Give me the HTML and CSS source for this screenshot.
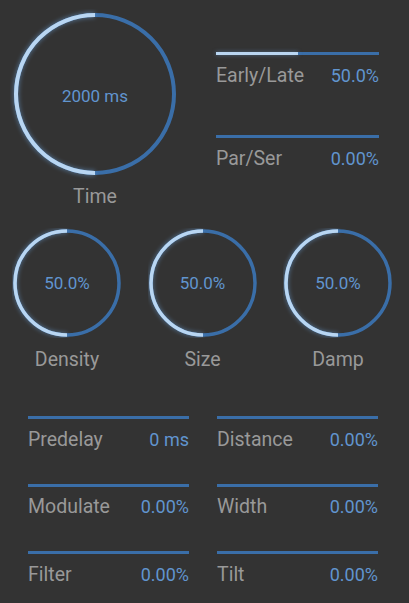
FILE: index.html
```html
<!DOCTYPE html>
<html lang="en">
<head>
    <meta charset="UTF-8">
    <meta name="viewport" content="width=device-width, initial-scale=1.0">
    <title>Reverb</title>
    <link rel="stylesheet" href="styles.css">
</head>
<body>
    <div class="top">
        <div class="big-knob">
            <div class="knob">
                <svg width="170" height="170" viewBox="0 0 170 170">
                    <circle class="track" cx="85" cy="85" r="79" stroke-width="4"/>
                    <path class="glow" d="M85 164 A79 79 0 0 1 85 6" stroke-width="6"/>
                    <path class="fill" d="M85 164 A79 79 0 0 1 85 6" stroke-width="4"/>
                </svg>
                <span class="knob-value big">2000 ms</span>
            </div>
            <div class="knob-label">Time</div>
        </div>

        <div class="side">
            <div class="slider">
                <div class="bar"><div class="bar-fill" style="width: 50%"></div></div>
                <div class="slider-row">
                    <span class="slider-label">Early/Late</span>
                    <span class="slider-value">50.0%</span>
                </div>
            </div>
            <div class="slider">
                <div class="bar"></div>
                <div class="slider-row">
                    <span class="slider-label">Par/Ser</span>
                    <span class="slider-value">0.00%</span>
                </div>
            </div>
        </div>
    </div>

    <div class="knob-row">
        <div class="small-knob">
            <div class="knob">
                <svg width="110" height="110" viewBox="0 0 110 110">
                    <circle class="track" cx="55" cy="55" r="52" stroke-width="3.5"/>
                    <path class="glow" d="M55 107 A52 52 0 0 1 55 3" stroke-width="5"/>
                    <path class="fill" d="M55 107 A52 52 0 0 1 55 3" stroke-width="3.5"/>
                </svg>
                <span class="knob-value">50.0%</span>
            </div>
            <div class="knob-label">Density</div>
        </div>
        <div class="small-knob">
            <div class="knob">
                <svg width="110" height="110" viewBox="0 0 110 110">
                    <circle class="track" cx="55" cy="55" r="52" stroke-width="3.5"/>
                    <path class="glow" d="M55 107 A52 52 0 0 1 55 3" stroke-width="5"/>
                    <path class="fill" d="M55 107 A52 52 0 0 1 55 3" stroke-width="3.5"/>
                </svg>
                <span class="knob-value">50.0%</span>
            </div>
            <div class="knob-label">Size</div>
        </div>
        <div class="small-knob">
            <div class="knob">
                <svg width="110" height="110" viewBox="0 0 110 110">
                    <circle class="track" cx="55" cy="55" r="52" stroke-width="3.5"/>
                    <path class="glow" d="M55 107 A52 52 0 0 1 55 3" stroke-width="5"/>
                    <path class="fill" d="M55 107 A52 52 0 0 1 55 3" stroke-width="3.5"/>
                </svg>
                <span class="knob-value">50.0%</span>
            </div>
            <div class="knob-label">Damp</div>
        </div>
    </div>

    <div class="slider-grid">
        <div class="slider">
            <div class="bar"></div>
            <div class="slider-row">
                <span class="slider-label">Predelay</span>
                <span class="slider-value">0 ms</span>
            </div>
        </div>
        <div class="slider">
            <div class="bar"></div>
            <div class="slider-row">
                <span class="slider-label">Distance</span>
                <span class="slider-value">0.00%</span>
            </div>
        </div>
        <div class="slider">
            <div class="bar"></div>
            <div class="slider-row">
                <span class="slider-label">Modulate</span>
                <span class="slider-value">0.00%</span>
            </div>
        </div>
        <div class="slider">
            <div class="bar"></div>
            <div class="slider-row">
                <span class="slider-label">Width</span>
                <span class="slider-value">0.00%</span>
            </div>
        </div>
        <div class="slider">
            <div class="bar"></div>
            <div class="slider-row">
                <span class="slider-label">Filter</span>
                <span class="slider-value">0.00%</span>
            </div>
        </div>
        <div class="slider">
            <div class="bar"></div>
            <div class="slider-row">
                <span class="slider-label">Tilt</span>
                <span class="slider-value">0.00%</span>
            </div>
        </div>
    </div>
</body>
</html>
```

FILE: styles.css
```css
/* Dasar */
body {
    margin: 0;
    background-color: #333333;
    font-family: Roboto, "Liberation Sans", sans-serif;
    color: #999999;
}

/* Bagian atas */
.top {
    display: flex;
    height: 228px;
}

.big-knob {
    width: 170px;
    padding: 9px 0 0 10px;
    display: flex;
    flex-direction: column;
    align-items: center;
}

.side {
    width: 163px;
    margin-left: 36px;
    padding-top: 52px;
    display: flex;
    flex-direction: column;
    gap: 49px;
}

/* Knob */
.knob {
    position: relative;
    display: flex;
}

.knob svg {
    display: block;
}

.track,
.fill,
.glow {
    fill: none;
}

.track {
    stroke: #3a6ea8;
}

.fill {
    stroke: #b9d6f2;
}

.glow {
    stroke: #6fa6e0;
    opacity: 0.45;
    filter: blur(2px);
}

.knob-value {
    position: absolute;
    inset: 0;
    display: flex;
    align-items: center;
    justify-content: center;
    font-size: 17px;
    color: #6195cf;
}

.knob-value.big {
    padding-top: 3px;
}

.knob-label {
    font-size: 19.5px;
    line-height: 22px;
    margin-top: 7px;
}

.knob-row {
    display: flex;
    gap: 25.5px;
    padding-left: 12px;
}

.small-knob {
    display: flex;
    flex-direction: column;
    align-items: center;
}

.small-knob .knob-label {
    margin-top: 11px;
}

/* Slider */
.bar {
    height: 3px;
    background-color: #3a6ea8;
}

.bar-fill {
    height: 100%;
    background-color: #b9d6f2;
    box-shadow: 0 0 4px rgba(111, 166, 224, 0.5);
}

.slider-row {
    display: flex;
    justify-content: space-between;
    align-items: center;
    margin-top: 9px;
    height: 22px;
}

.slider-label {
    font-size: 19.5px;
}

.slider-value {
    font-size: 18px;
    color: #6195cf;
}

.slider-grid {
    display: grid;
    grid-template-columns: 161px 161px;
    column-gap: 28px;
    row-gap: 33.5px;
    padding-left: 28px;
    margin-top: 45px;
}
```
